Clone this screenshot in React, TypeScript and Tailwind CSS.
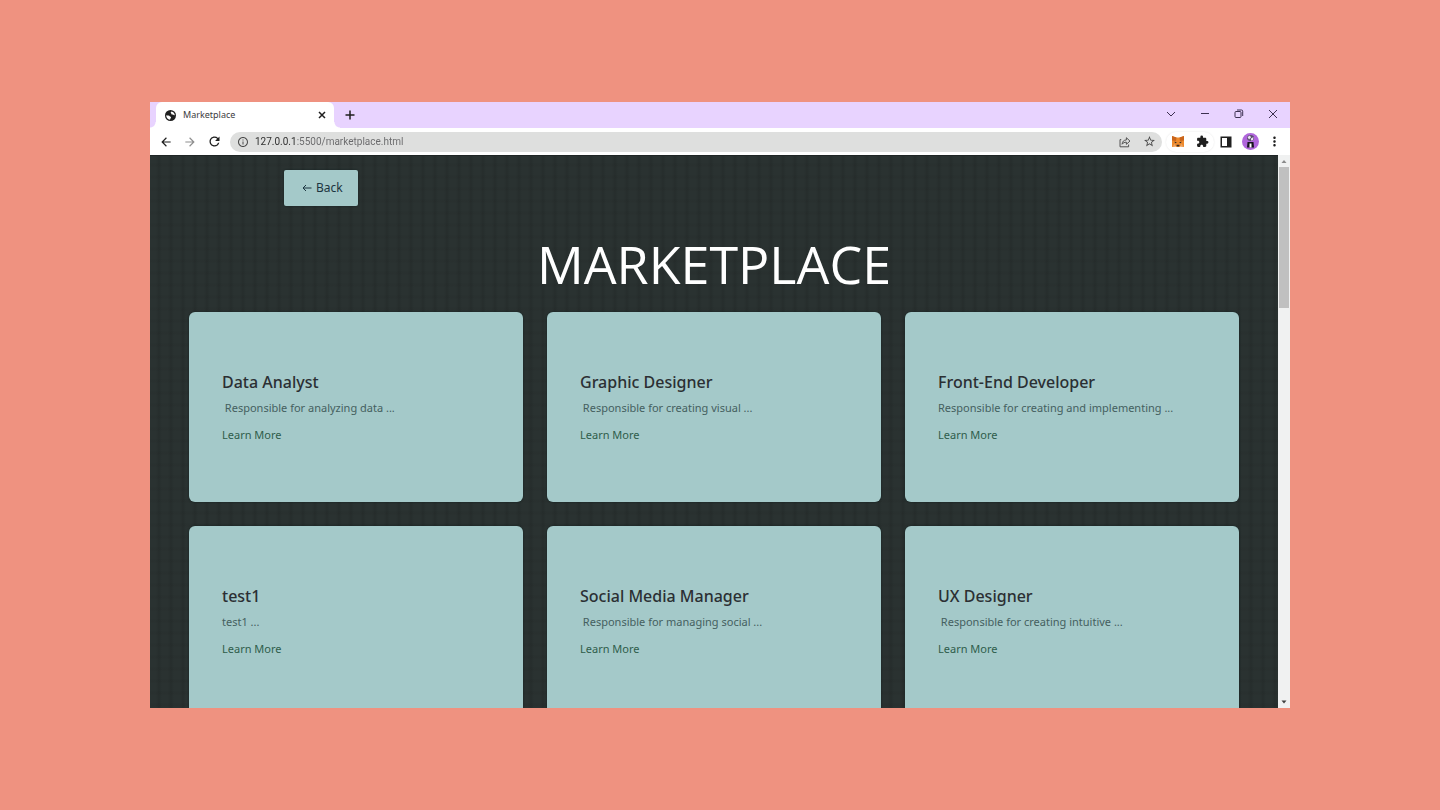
import type { ReactNode } from 'react'
import {
  MdArrowBack,
  MdArrowForward,
  MdExtension,
  MdInfoOutline,
  MdMoreVert,
  MdRefresh,
  MdStarOutline,
} from 'react-icons/md'

const jobs = [
  { title: 'Data Analyst', text: '\u00a0Responsible for analyzing data ...' },
  { title: 'Graphic Designer', text: '\u00a0Responsible for creating visual ...' },
  { title: 'Front-End Developer', text: 'Responsible for creating and implementing ...' },
  { title: 'test1', text: 'test1 ...' },
  { title: 'Social Media Manager', text: '\u00a0Responsible for managing social ...' },
  { title: 'UX Designer', text: '\u00a0Responsible for creating intuitive ...' },
]

function IconButton({ label, className = '', children }: { label: string; className?: string; children: ReactNode }) {
  return (
    <button type="button" aria-label={label} className={`flex h-6 w-6 shrink-0 items-center justify-center ${className}`}>
      {children}
    </button>
  )
}

function GlobeIcon() {
  return (
    <svg viewBox="0 0 22 22" className="h-[11px] w-[11px] shrink-0">
      <circle cx="11" cy="11" r="11" fill="#1f1f1f" />
      <path d="M2.500 10.500c3 .5 6 .2 7.500 2.500 2 0 2.500 1.500 1.500 3-1 1-1 2.500-1.500 3.500-4.500-.5-8-4.500-7.500-9z" fill="#fff" />
      <path d="M13 2.800c3.500.7 6.500 4 6.600 7.700-1.600.8-2.600-.5-3.600-1.500-2 .5-4-.5-3.500-2.500-2-.7-1-2.700.5-3.700z" fill="#fff" />
    </svg>
  )
}

function ShareIcon() {
  return (
    <svg viewBox="0 0 14 14" className="h-3 w-3" fill="none" stroke="currentColor" strokeWidth="1.1" strokeLinejoin="round">
      <path d="M2.600 4.200H1.200v8.400h10V10" />
      <path d="M3.600 9.600c.3-3.300 2-4.900 5-5V2l4.200 3.900-4.200 3.800V7.200c-2.200 0-3.800.7-5 2.400z" />
    </svg>
  )
}

function FoxIcon() {
  return (
    <svg viewBox="0 0 24 22" className="h-[11px] w-3">
      <path d="M0 0l9 3h6l9-3v22l-7-1-2 1H9l-2-1-7 1z" fill="#ee8a2c" />
      <path d="M0 0l9 3-1 7-8-1zM24 0l-9 3 1 7 8-1z" fill="#c9651c" />
      <path d="M1 21l6-1-1-5zM23 21l-6-1 1-5z" fill="#e8a468" />
      <path d="M5 11l5 2.200-4 1.300zM19 11l-5 2.200 4 1.300z" fill="#33302f" />
      <path d="M9.500 17.500h5l.5 2.500-1.500 1h-3L9 20z" fill="#3a2a20" />
    </svg>
  )
}

function SidePanelIcon() {
  return (
    <svg viewBox="0 0 12 12" className="h-3 w-3">
      <path d="M.5 .5h11v11H.5zM2 2v8h5V2z" fill="#1f1f1f" fillRule="evenodd" />
    </svg>
  )
}

function Avatar() {
  return (
    <svg viewBox="0 0 34 34" className="h-[17px] w-[17px]">
      <circle cx="17" cy="17" r="17" fill="#b066dc" />
      <path d="M10 10c0-4 3-6 7-6s8 2 7 6c0 4-3 6-7 6s-7-2-7-6z" fill="#5a4d6c" />
      <path d="M11 8l5-3 2 4-4 4zM18 11l5-3-1 6-4 1z" fill="#ece4f3" />
      <path d="M11 18h12l1 11H10z" fill="#17131f" />
      <path d="M15 21h4v8h-4z" fill="#fff" />
    </svg>
  )
}

function TabStrip() {
  return (
    <div className="flex h-[26px] shrink-0 items-stretch bg-[#e8d3ff]">
      <div className="w-[6px] self-end">
        <div className="h-[6px] bg-[radial-gradient(circle_at_top_left,transparent_5px,#fff_6px)]" />
      </div>
      <div className="flex w-[178px] items-center rounded-t-md bg-white pl-[9px] pr-1">
        <GlobeIcon />
        <span className="ml-[7px] flex-1 text-[9px] text-[#3c3c40]">Marketplace</span>
        <button type="button" aria-label="Close tab" className="flex h-4 w-4 items-center justify-center text-[#1f1f1f]">
          <svg viewBox="0 0 8 8" className="h-2 w-2" stroke="currentColor" strokeWidth="1.500">
            <path d="M1 1l6 6M7 1L1 7" />
          </svg>
        </button>
      </div>
      <div className="w-[6px] self-end">
        <div className="h-[6px] bg-[radial-gradient(circle_at_top_right,transparent_5px,#fff_6px)]" />
      </div>
      <button type="button" aria-label="New tab" className="flex w-5 items-center justify-center text-[#1f1f1f]">
        <svg viewBox="0 0 10 10" className="h-[10px] w-[10px]" stroke="currentColor" strokeWidth="1.500">
          <path d="M5 .5v9M.5 5h9" />
        </svg>
      </button>
      <div className="ml-auto flex items-start text-[#3c3050]">
        <button type="button" aria-label="Search tabs" className="flex h-6 w-[34px] items-center justify-center">
          <svg viewBox="0 0 10 10" className="h-[10px] w-[10px]" fill="none" stroke="currentColor">
            <path d="M1 3l4 4 4-4" />
          </svg>
        </button>
        <button type="button" aria-label="Minimize" className="flex h-6 w-[34px] items-center justify-center">
          <svg viewBox="0 0 10 10" className="h-[10px] w-[10px]" fill="none" stroke="currentColor">
            <path d="M1 4.500h8" />
          </svg>
        </button>
        <button type="button" aria-label="Restore" className="flex h-6 w-[34px] items-center justify-center">
          <svg viewBox="0 0 10 10" className="h-[10px] w-[10px]" fill="none" stroke="currentColor">
            <rect x="1" y="2.500" width="6" height="6" rx="1" />
            <path d="M3 1h4.500q1.200 0 1.200 1.200V7" />
          </svg>
        </button>
        <button type="button" aria-label="Close window" className="flex h-6 w-[34px] items-center justify-center">
          <svg viewBox="0 0 10 10" className="h-[10px] w-[10px]" fill="none" stroke="currentColor">
            <path d="M1 1l8 8M9 1L1 9" />
          </svg>
        </button>
      </div>
    </div>
  )
}

function Toolbar() {
  return (
    <div className="flex h-[27px] shrink-0 items-center bg-white pr-1 pl-1 text-[#1f1f1f]">
      <IconButton label="Back">
        <MdArrowBack className="h-[14px] w-[14px]" />
      </IconButton>
      <IconButton label="Forward" className="text-[#8e8e8e]">
        <MdArrowForward className="h-[14px] w-[14px]" />
      </IconButton>
      <IconButton label="Reload">
        <MdRefresh className="h-[15px] w-[15px]" />
      </IconButton>
      <div className="ml-1 flex h-5 flex-1 items-center rounded-full bg-[#dedfde] pr-px pl-[7px] text-[#4a4a4a]">
        <MdInfoOutline className="h-3 w-3 shrink-0" />
        <input
          type="text"
          aria-label="Address"
          defaultValue="127.0.0.1:5500/marketplace.html"
          className="ml-[6px] h-5 min-w-0 flex-1 bg-[linear-gradient(to_right,#2a2a2a_41px,#68686a_41px)] bg-clip-text font-[Roboto,sans-serif] text-[10px] text-transparent outline-none"
        />
        <IconButton label="Share">
          <ShareIcon />
        </IconButton>
        <IconButton label="Bookmark">
          <MdStarOutline className="h-[13px] w-[13px]" />
        </IconButton>
      </div>
      <div className="ml-1 flex h-5 items-center rounded-full shadow-[0_0_2px_#e4e4e4]">
        <IconButton label="MetaMask">
          <FoxIcon />
        </IconButton>
        <IconButton label="Extensions">
          <MdExtension className="h-[13px] w-[13px]" />
        </IconButton>
      </div>
      <IconButton label="Side panel">
        <SidePanelIcon />
      </IconButton>
      <IconButton label="Profile">
        <Avatar />
      </IconButton>
      <IconButton label="Menu">
        <MdMoreVert className="h-[15px] w-[15px]" />
      </IconButton>
    </div>
  )
}

function Scrollbar() {
  return (
    <div className="flex w-3 shrink-0 flex-col items-center bg-[#f0f1f1]">
      <svg viewBox="0 0 12 12" className="h-3 w-3 shrink-0">
        <path d="M3.500 8L6 5l2.500 3z" fill="#8a8a8a" />
      </svg>
      <div className="h-[141px] w-[10px] shrink-0 bg-[#c0c0c0]" />
      <svg viewBox="0 0 12 12" className="mt-auto h-3 w-3 shrink-0">
        <path d="M3.500 4.500L6 7.500l2.500-3z" fill="#404040" />
      </svg>
    </div>
  )
}

function JobCard({ title, text }: { title: string; text: string }) {
  return (
    <article className="h-[190px] rounded-md bg-[#a4c9c9] px-[33px] pt-[58px] shadow-[0_0_2px_#10201f]">
      <h2 className="text-[16px] leading-6 font-medium text-[#2b2f33]">{title}</h2>
      <p className="mt-1 text-[11px] leading-5 text-[#44605f]">{text}</p>
      <a href="#" className="mt-[7px] block text-[11px] leading-5 text-[#2f5d4b]">
        Learn More
      </a>
    </article>
  )
}

export default function App() {
  return (
    <div className="flex h-screen bg-[#ef9280] px-[150px] py-[102px] font-['Noto_Sans','Open_Sans',sans-serif]">
      <div className="flex min-w-0 flex-1 flex-col overflow-hidden">
        <TabStrip />
        <Toolbar />
        <div className="flex min-h-0 flex-1">
          <main className="min-w-0 flex-1 overflow-hidden border-t border-[#1f2525] bg-[#2a3231] bg-[repeating-linear-gradient(to_right,transparent_0_6px,rgba(0,0,0,0.09)_9px,transparent_12px),repeating-linear-gradient(to_bottom,transparent_0_6px,rgba(0,0,0,0.04)_9px,transparent_12px)] px-[39px]">
            <div className="flex pt-[14px] pl-[95px]">
              <a href="#" className="flex h-9 items-center gap-1 rounded-xs bg-[#a4c9c9] pr-[15px] pl-[18px] text-[12px] text-[#1c3540] shadow-[0_0_2px_#10201f]">
                <svg viewBox="0 0 10 10" className="h-[10px] w-[10px]" fill="none" stroke="currentColor">
                  <path d="M9.500 5H1M4 2L1 5l3 3" />
                </svg>
                Back
              </a>
            </div>
            <h1 className="pt-[26px] pb-4 text-center font-['Open_Sans',sans-serif] text-[52px] leading-[64px] text-white">
              MARKETPLACE
            </h1>
            <div className="grid grid-cols-3 gap-6">
              {jobs.map((job) => (
                <JobCard key={job.title} title={job.title} text={job.text} />
              ))}
            </div>
          </main>
          <Scrollbar />
        </div>
      </div>
    </div>
  )
}
